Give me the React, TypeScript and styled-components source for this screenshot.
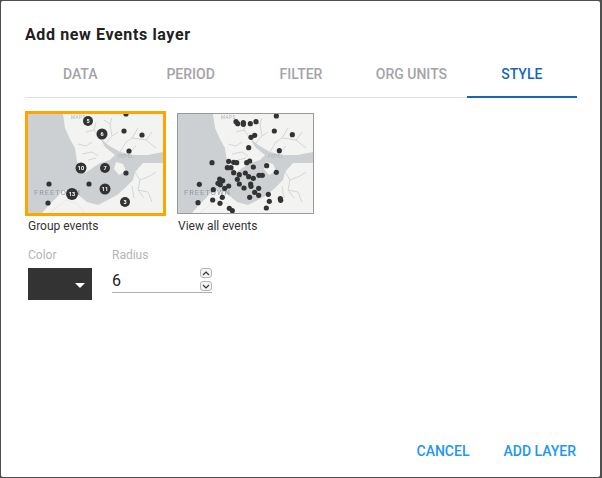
import React from "react";
import styled, { createGlobalStyle } from "styled-components";

const Global = createGlobalStyle`
  html, body { margin: 0; padding: 0; background: #4f4f4f; }
  body { font-family: Roboto, "Liberation Sans", sans-serif; }
  #root { width: 602px; height: 478px; overflow: hidden; }
`;

const Backdrop = styled.div`
  width: 602px;
  height: 478px;
  box-sizing: border-box;
  padding: 1px 2px 1px 1px;
  background: #4f4f4f;
`;

const Dialog = styled.div`
  height: 100%;
  box-sizing: border-box;
  background: #fff;
  border-radius: 2px;
  padding: 24px 24px 16px 24px;
  display: flex;
  flex-direction: column;
`;

const Title = styled.h2`
  margin: 0;
  font-size: 16px;
  line-height: 19px;
  font-weight: 700;
  letter-spacing: 0.62px;
  color: #212121;
`;

const Tabs = styled.div`
  display: flex;
  margin-top: 7px;
  width: 552px;
  border-bottom: 1px solid #e0e0e0;
`;

const Tab = styled.div<{ $active?: boolean }>`
  flex: 1;
  height: 47px;
  box-sizing: border-box;
  margin-bottom: -1px;
  padding-top: 1px;
  display: flex;
  align-items: center;
  justify-content: center;
  font-size: 14px;
  font-weight: 500;
  text-transform: uppercase;
  color: ${(p) => (p.$active ? "#1565c0" : "#a3a3a8")};
  border-bottom: 2px solid ${(p) => (p.$active ? "#1565c0" : "transparent")};
`;

const Thumbs = styled.div`
  display: flex;
  gap: 9px;
  margin-top: 13px;
`;

const ThumbItem = styled.div`
  width: 141px;
`;

const Frame = styled.div<{ $selected?: boolean }>`
  width: 141px;
  height: 105px;
  box-sizing: border-box;
  display: flex;
  align-items: center;
  justify-content: center;
  ${(p) => (p.$selected ? "border: 3px solid #ffa500;" : "")}
`;

const MapBox = styled.div<{ $selected?: boolean }>`
  width: ${(p) => (p.$selected ? "135px" : "137px")};
  height: ${(p) => (p.$selected ? "99px" : "101px")};
  box-sizing: border-box;
  flex: none;
  ${(p) => (p.$selected ? "" : "border: 1px solid #9a9a9a;")}
  svg { display: block; filter: blur(0.25px); }
`;

const ThumbLabel = styled.div`
  margin-top: 3px;
  padding-left: 3px;
  font-size: 12px;
  line-height: 14px;
  color: #333;
`;

const Controls = styled.div`
  display: flex;
  gap: 20px;
  margin: 15px 0 0 3px;
`;

const FieldLabel = styled.div`
  font-size: 12px;
  line-height: 14px;
  color: #b5b5b5;
  margin-bottom: 6px;
`;

const Swatch = styled.div`
  width: 64px;
  height: 32px;
  background: #333;
  display: flex;
  align-items: center;
  justify-content: flex-end;
  padding-right: 7px;
  box-sizing: border-box;
`;

const Caret = styled.div`
  width: 0;
  height: 0;
  margin-top: 3px;
  border-left: 5px solid transparent;
  border-right: 5px solid transparent;
  border-top: 5px solid #fff;
`;

const RadiusField = styled.div`
  width: 100px;
  height: 25px;
  box-sizing: border-box;
  border-bottom: 1px solid #b0b0b0;
  display: flex;
  justify-content: space-between;
`;

const RadiusValue = styled.div`
  font-size: 16px;
  line-height: 26px;
  color: #222;
`;

const Spinner = styled.div`
  display: flex;
  flex-direction: column;
  gap: 3px;
  margin: 0 0 0 0;
`;

const SpinButton = styled.div`
  width: 12px;
  height: 10px;
  box-sizing: border-box;
  border: 1px solid #b5b5b5;
  border-radius: 3px;
  background: #f5f5f5;
  display: flex;
  align-items: center;
  justify-content: center;
`;

const Footer = styled.div`
  margin-top: auto;
  display: flex;
  justify-content: flex-end;
  gap: 34px;
`;

const ActionButton = styled.button`
  border: 0;
  background: none;
  padding: 0;
  font: 500 14px/20px Roboto, sans-serif;
  color: #2196f3;
  text-transform: uppercase;
`;

const clusters: [number, number, number, string][] = [
  [60, 7, 5, "5"], [74, 20, 5.5, "6"], [53, 54, 5.5, "10"], [77, 54, 5, "7"],
  [77, 75, 5.5, "11"], [44, 80, 6, "13"], [97, 88, 5, "3"],
];
const singles: [number, number][] = [
  [96, 17], [114, 21], [101, 37], [98, 59], [21, 70], [61, 70], [20, 89], [98, 0],
];
const events: [number, number][] = [
  [313,30],[192,47],[197,53],[214,55],[214,50],[235,53],[252,47],[307,75],[361,86],[248,88],
  [237,94],[230,125],[322,134],[120,170],[170,166],[185,169],[194,170],[224,170],[233,165],
  [166,185],[177,185],[244,183],[284,179],[185,200],[202,206],[220,201],[230,212],[244,217],
  [261,208],[271,208],[313,199],[196,220],[143,219],[152,224],[138,232],[145,236],[170,240],
  [158,247],[202,234],[236,234],[237,241],[216,246],[260,247],[82,235],[124,251],[248,259],
  [260,268],[233,274],[289,265],[151,274],[122,282],[144,292],[78,290],[292,286],[325,278],
  [326,283],[283,306],[172,307],[181,314],
];

const MapArt = ({ children }: { children: React.ReactNode }) => (
  <svg width="135" height="99" viewBox="0 0 135 99" xmlns="http://www.w3.org/2000/svg">
    <rect width="135" height="99" fill="#f3f3f2" />
    <path
      d="M0 0H35L37 14L42 25L47 34L49 48L57 59L66 53L72 49L82 46L87 41L77 33L72 24L80 31L92 38L105 41L120 41L135 38V49L115 49L107 58L105 66L97 74L89 81L78 87L70 91L59 88L47 78L35 76L30 82L20 92L14 99H0Z"
      fill="#ccd0d3"
    />
    <path d="M88 48L95 50L98 57L91 61L86 55Z" fill="#f3f3f2" />
    <g fill="none" stroke="#cfd3d6" strokeWidth="0.9">
      <path d="M72 24L66 16L68 8M66 16L58 18M77 30L84 22L82 10L84 4M84 22L90 18M82 10L76 6" />
      <path d="M92 38L98 28L104 24L110 14M104 24L118 26L124 18M118 26L128 34M100 41L108 32" />
      <path d="M50 30L58 32L64 28M54 40L64 38L70 42M60 46L68 44" />
      <path d="M107 58L112 66L110 76L116 84M112 66L122 62L128 58M110 76L120 78L124 88M104 72L106 84" />
    </g>
    <g fill="none" stroke="#ecdcdc" strokeWidth="0.6">
      <path d="M22 99L38 86L50 90L56 99" />
    </g>
    <text x="43" y="5" fontSize="4.5" letterSpacing="0.6" fill="#aab0bb" fontFamily="Roboto, sans-serif">MAPS</text>
    <text x="90" y="44" fontSize="4.5" letterSpacing="0.4" fill="#aab0bb" fontFamily="Roboto, sans-serif">PEPEL</text>
    <text x="6" y="81" fontSize="7.5" letterSpacing="1" fill="#8f99a8" fontFamily="Roboto, sans-serif">FREETOWN</text>
    {children}
  </svg>
);

const Chevron = ({ up }: { up?: boolean }) => (
  <svg width="8" height="5" viewBox="0 0 8 5">
    <path d={up ? "M1 4L4 1L7 4" : "M1 1L4 4L7 1"} fill="none" stroke="#333" strokeWidth="1.2" />
  </svg>
);

export default function App() {
  return (
    <>
      <Global />
      <Backdrop>
        <Dialog>
          <Title>Add new Events layer</Title>
          <Tabs>
            <Tab>Data</Tab>
            <Tab>Period</Tab>
            <Tab>Filter</Tab>
            <Tab>Org units</Tab>
            <Tab $active>Style</Tab>
          </Tabs>
          <Thumbs>
            <ThumbItem>
              <Frame $selected>
                <MapBox $selected>
                  <MapArt>
                    {singles.map(([x, y]) => (
                      <circle key={`${x}-${y}`} cx={x} cy={y} r="2.6" fill="#333" />
                    ))}
                    {clusters.map(([x, y, r, t]) => (
                      <g key={t}>
                        <circle cx={x} cy={y} r={r} fill="#333" />
                        <text x={x} y={y + 2} textAnchor="middle" fontSize="5.5" fontWeight="700" fill="#fff" fontFamily="Roboto, sans-serif">{t}</text>
                      </g>
                    ))}
                  </MapArt>
                </MapBox>
              </Frame>
              <ThumbLabel>Group events</ThumbLabel>
            </ThumbItem>
            <ThumbItem>
              <Frame>
                <MapBox>
                  <MapArt>
                    {events.map(([x, y]) => (
                      <circle key={`${x}-${y}`} cx={x / 3 - 6} cy={y / 3 - 8} r="2.6" fill="#333" />
                    ))}
                  </MapArt>
                </MapBox>
              </Frame>
              <ThumbLabel>View all events</ThumbLabel>
            </ThumbItem>
          </Thumbs>
          <Controls>
            <div>
              <FieldLabel>Color</FieldLabel>
              <Swatch><Caret /></Swatch>
            </div>
            <div>
              <FieldLabel>Radius</FieldLabel>
              <RadiusField>
                <RadiusValue>6</RadiusValue>
                <Spinner>
                  <SpinButton><Chevron up /></SpinButton>
                  <SpinButton><Chevron /></SpinButton>
                </Spinner>
              </RadiusField>
            </div>
          </Controls>
          <Footer>
            <ActionButton>Cancel</ActionButton>
            <ActionButton>Add layer</ActionButton>
          </Footer>
        </Dialog>
      </Backdrop>
    </>
  );
}
